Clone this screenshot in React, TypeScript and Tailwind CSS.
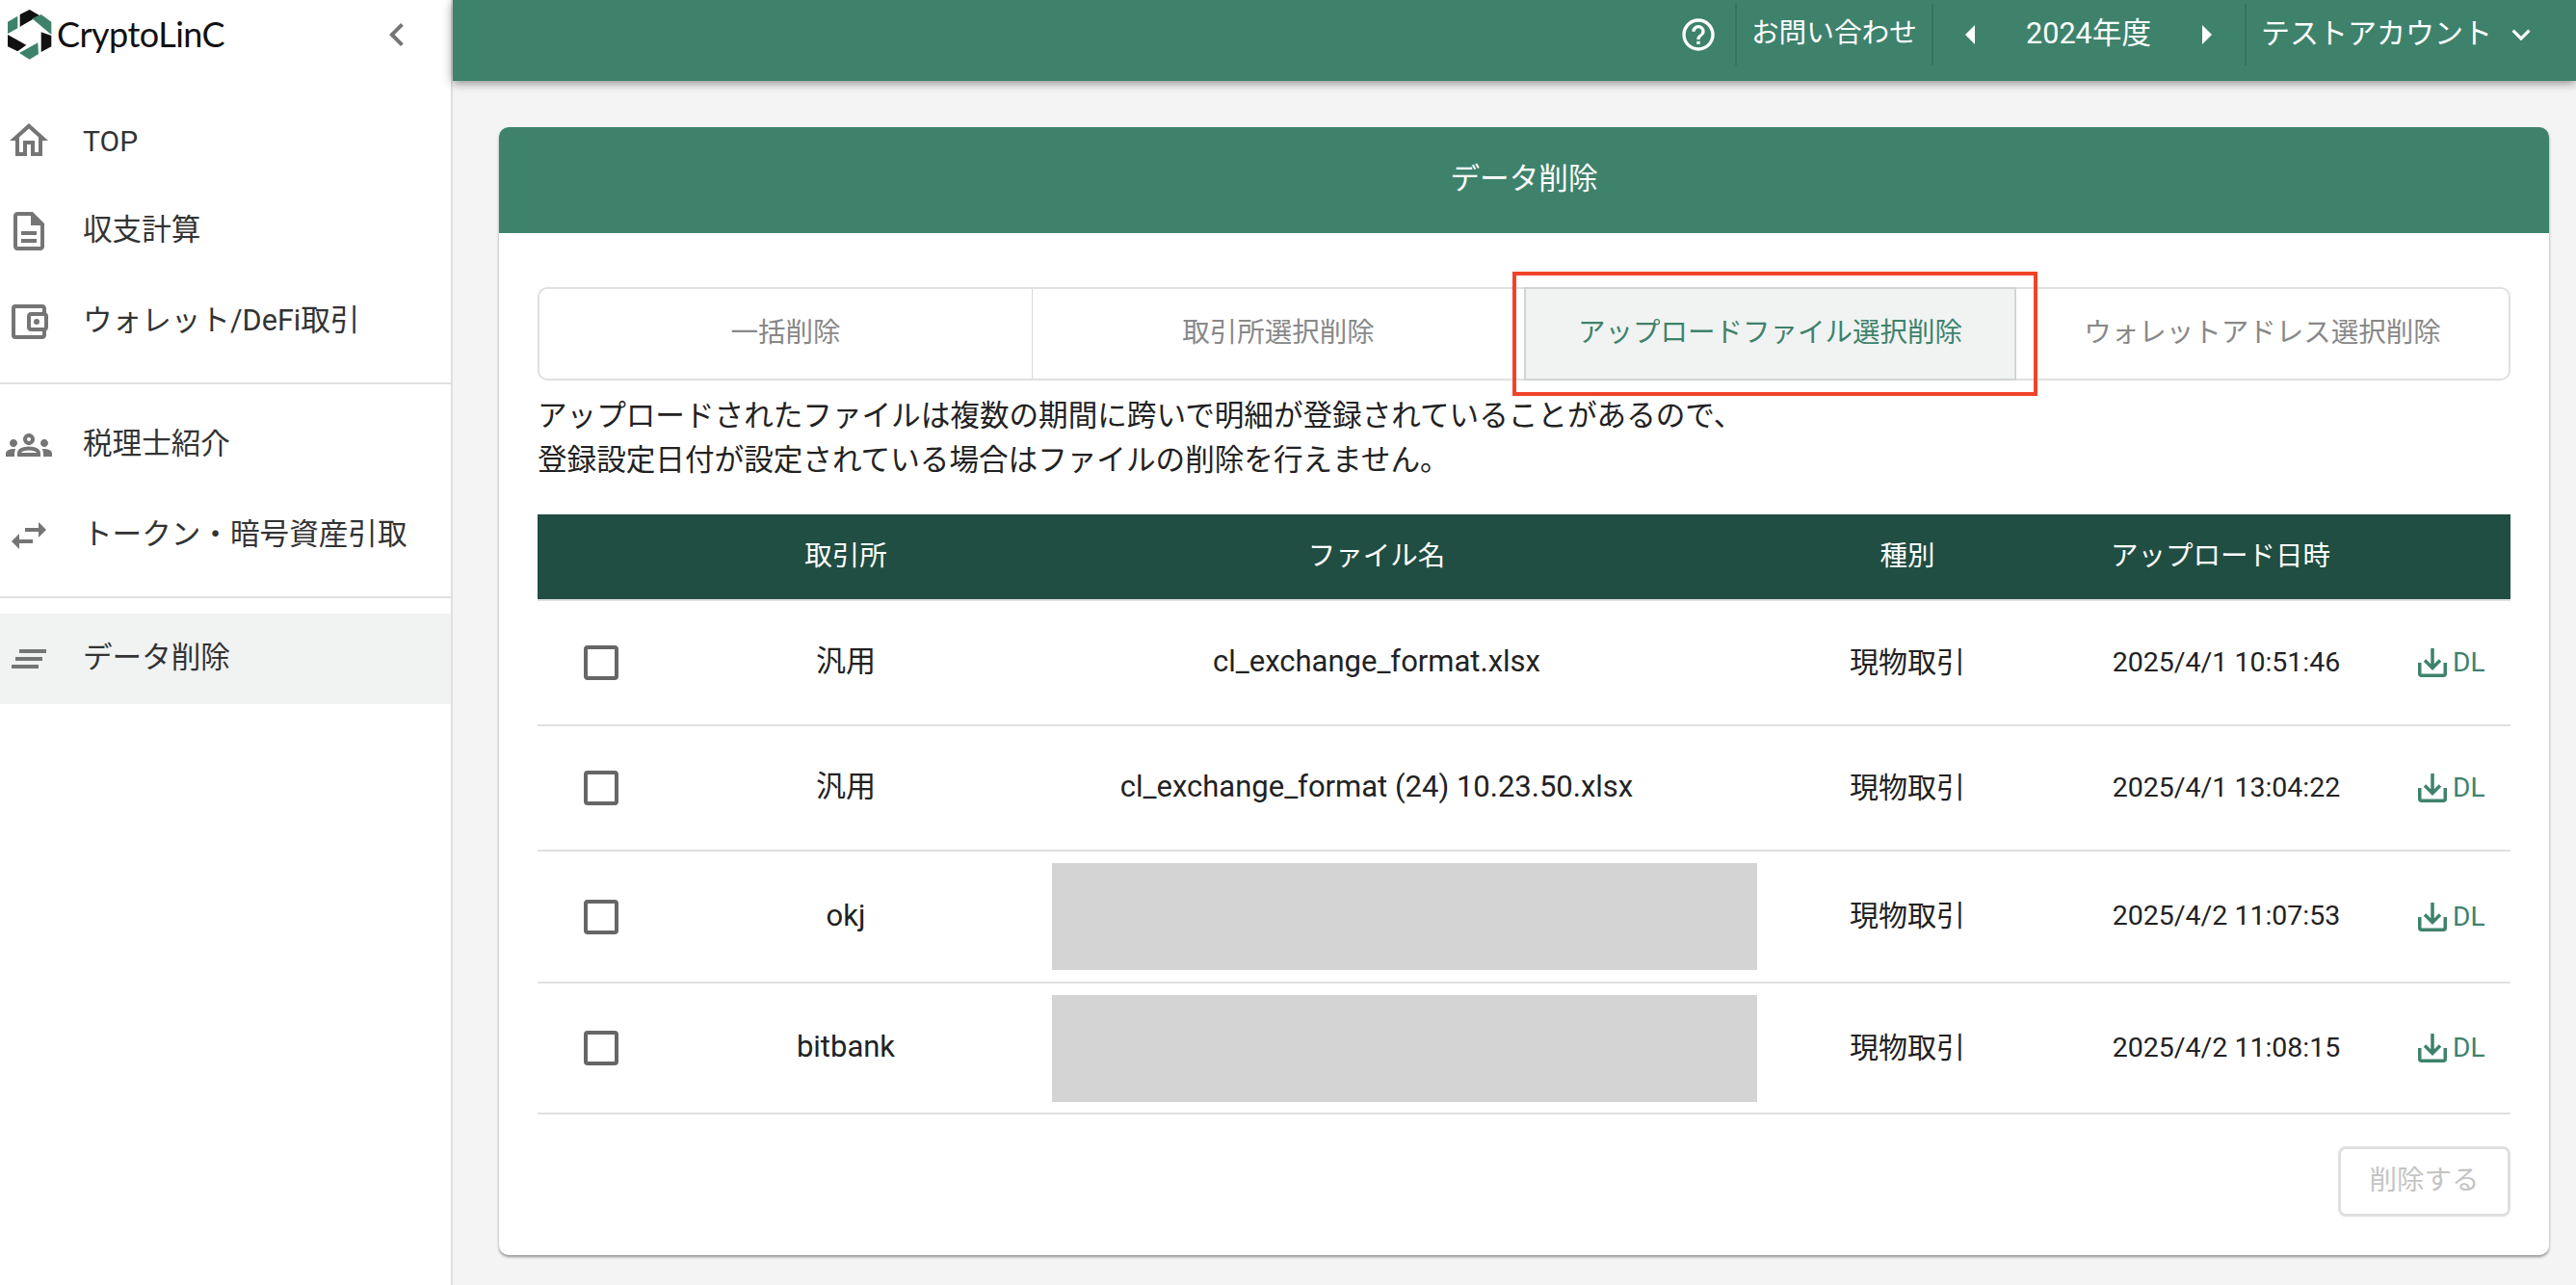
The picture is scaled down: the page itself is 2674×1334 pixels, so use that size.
import { MdOutlineHome, MdOutlineAccountBalanceWallet, MdOutlineGroups, MdSwapHoriz, MdChevronLeft, MdHelpOutline, MdArrowLeft, MdArrowRight, MdKeyboardArrowDown } from "react-icons/md";

const font = "font-['Roboto','Noto_Sans_CJK_JP',sans-serif]";

const rows = [
  { exchange: "汎用", file: "cl_exchange_format.xlsx", date: "2025/4/1 10:51:46", h: "h-[130px]" },
  { exchange: "汎用", file: "cl_exchange_format (24) 10.23.50.xlsx", date: "2025/4/1 13:04:22", h: "h-[130px]" },
  { exchange: "okj", file: "", date: "2025/4/2 11:07:53", h: "h-[137px]" },
  { exchange: "bitbank", file: "", date: "2025/4/2 11:08:15", h: "h-[136px]" },
];

const tabs = ["一括削除", "取引所選択削除", "アップロードファイル選択削除", "ウォレットアドレス選択削除"];

function Logo() {
  return (
    <svg viewBox="0 0 46 52" className="w-[46px] h-[52px] shrink-0">
      <path d="M12.700 5 22.700 0 33 6 14 17 12.700 18z" fill="#111" />
      <path d="M25.300 9.300 34.700 5 45.300 12.700V26z" fill="#3e826c" />
      <path d="M34.700 23.300 45.300 27V38.300L34.700 44z" fill="#111" />
      <path d="M12 45 31.300 34.300 32 46 22.700 51.700z" fill="#3e826c" />
      <path d="M0 26 19.300 36.700 10.300 43.300 0 38.300z" fill="#111" />
      <path d="M0 12.700 10.300 6.700V19.300L0 25z" fill="#3e826c" />
    </svg>
  );
}

function DocIcon() {
  return (
    <svg viewBox="0 0 24 24" className="w-12 h-12 shrink-0" fill="#757575">
      <path d="M6 2h8l6 6v12c0 1.100-.9 2-2 2H6c-1.100 0-2-.9-2-2V4c0-1.100.9-2 2-2zm0 2v16h12V9h-5V4H6zm2 8h8v2H8zm0 4h8v2H8z" />
    </svg>
  );
}

function NotesIcon() {
  return (
    <svg viewBox="0 0 48 48" className="w-12 h-12 shrink-0" fill="#757575">
      <path d="M14 14h28v4H14zM10 22h28v4H10zM6 30h28v4H6z" />
    </svg>
  );
}

function DownloadIcon() {
  return (
    <svg viewBox="0 0 30 30" className="w-[30px] h-[30px] shrink-0" fill="none" stroke="#3e826c" strokeWidth="3.500">
      <path d="M15 0v20M7 12.500l8 8 8-8" />
      <path d="M1.750 15v11.250a2 2 0 0 0 2 2h22.500a2 2 0 0 0 2-2V15" />
    </svg>
  );
}

function NavItem({ icon, label, active }: { icon: React.ReactNode; label: string; active?: boolean }) {
  return (
    <div className={`flex items-center h-[94px] pl-[6px] gap-[32px] text-[30.600px] text-[#333] ${active ? "bg-[#f0f3f2]" : ""}`}>
      {icon}
      <span className={label === "TOP" ? "text-[30px]" : "pb-[3px]"}>{label}</span>
    </div>
  );
}

export default function App() {
  return (
    <div className={`${font} flex h-[1334px] w-[2674px] overflow-hidden bg-[#f4f4f4]`}>
      <aside className="w-[470px] shrink-0 bg-white border-r-2 border-[#e0e0e0]">
        <div className="flex items-center h-[72px] pl-[8px] pr-[32px]">
          <Logo />
          <span className="ml-[5px] pb-[2px] text-[36px] tracking-[-0.5px] text-[#111] font-['Lato',sans-serif]">CryptoLinC</span>
          <MdChevronLeft className="ml-auto w-12 h-12 text-[#757575]" />
        </div>
        <div className="pt-[27px] pb-4 border-b-2 border-[#e0e0e0]">
          <NavItem icon={<MdOutlineHome className="w-12 h-12 shrink-0 text-[#757575]" />} label="TOP" />
          <NavItem icon={<DocIcon />} label="収支計算" />
          <NavItem icon={<MdOutlineAccountBalanceWallet className="w-12 h-12 shrink-0 text-[#757575]" />} label="ウォレット/DeFi取引" />
        </div>
        <div className="py-4 border-b-2 border-[#e0e0e0]">
          <NavItem icon={<MdOutlineGroups className="w-12 h-12 shrink-0 text-[#757575]" />} label="税理士紹介" />
          <NavItem icon={<MdSwapHoriz className="w-12 h-12 shrink-0 text-[#757575]" />} label="トークン・暗号資産引取" />
        </div>
        <div className="pt-4">
          <NavItem icon={<NotesIcon />} label="データ削除" active />
        </div>
      </aside>

      <div className="flex-1 min-w-0 flex flex-col">
        <header className="flex items-center justify-end h-[84px] shrink-0 bg-[#3e826c] text-white text-[28.700px] shadow-[0_2px_10px_rgba(0,0,0,0.45)] pr-[38px] z-10">
          <div className="flex items-center h-[64px] -mt-[12px] pr-[18px]">
            <MdHelpOutline className="w-10 h-10" />
          </div>
          <div className="flex items-center h-[64px] -mt-[12px] px-[15px] pb-[3px] border-l-2 border-[#367360]">お問い合わせ</div>
          <div className="flex items-center h-[64px] -mt-[12px] pl-[15px] pr-[16px] border-l-2 border-[#367360]">
            <MdArrowLeft className="w-12 h-12" />
            <span className="w-[196px] text-center text-[30.600px] pb-[3px]">2024年度</span>
            <MdArrowRight className="w-12 h-12" />
          </div>
          <div className="flex items-center h-[64px] -mt-[12px] pl-[15px] border-l-2 border-[#367360] text-[30px]">
            <span className="pb-[3px]">テストアカウント</span>
            <MdKeyboardArrowDown className="ml-[11px] w-[38px] h-[38px]" />
          </div>
        </header>

        <main className="pt-[48px] pl-[48px] pr-[28px]">
          <div className="h-[1171px] bg-white rounded-[10px] shadow-[0_2px_3px_rgba(0,0,0,0.4)] overflow-hidden">
            <div className="flex items-center justify-center h-[110px] pb-[2px] bg-[#3e826c] text-white text-[30.600px]">データ削除</div>
            <div className="pl-[40px] pr-[40px] pt-[56px]">
              <div className="grid grid-cols-4 h-[97px] rounded-[10px] border-2 border-[#e0e0e0] text-[#888] text-[28.500px]">
                {tabs.map((t, i) => (
                  <div
                    key={t}
                    className={`flex items-center justify-center ${i === 1 ? "border-l border-[#d8d8d8]" : ""} ${i === 2 ? "relative bg-[#f0f3f2] text-[#3e826c] border-2 border-[#d0d5d3] -my-[2px]" : ""}`}
                  >
                    {t}
                    {i === 2 && <div className="absolute -left-[14px] -right-[24px] -top-[18px] -bottom-[18px] border-4 border-[#f04329]" />}
                  </div>
                ))}
              </div>
              <p className="mt-[14px] text-[30.600px] leading-[46px] text-[#222]">
                アップロードされたファイルは複数の期間に跨いで明細が登録されていることがあるので、
                <br />
                登録設定日付が設定されている場合はファイルの削除を行えません。
              </p>
              <div className="mt-[33px]">
                <div className="grid grid-cols-[132px_376px_726px_376px_274px_164px] items-center h-[90px] bg-[#204e42] border-b-2 border-[#e0e0e0] text-white text-[28.500px] text-center">
                  <div />
                  <div>取引所</div>
                  <div>ファイル名</div>
                  <div>種別</div>
                  <div>アップロード日時</div>
                  <div />
                </div>
                {rows.map((r) => (
                  <div key={r.date} className={`grid grid-cols-[132px_376px_726px_376px_274px_164px] items-center ${r.h} border-b-2 border-[#e0e0e0] text-[#222] text-[31px] text-center`}>
                    <div className="flex justify-center">
                      <span className="w-9 h-9 rounded-[4px] border-4 border-[#666]" />
                    </div>
                    <div className="pb-[1px]">{r.exchange}</div>
                    <div className="relative h-full flex items-center justify-center pb-[1px]">
                      {r.file}
                      {!r.file && <div className="absolute left-[26px] top-[12px] h-[111px] w-[732px] bg-[#d4d4d4]" />}
                    </div>
                    <div className="pb-[2px] text-[30px]">現物取引</div>
                    <div className="pl-[12px] text-[28.500px]">{r.date}</div>
                    <div className="flex items-center pl-[68px] text-[#3e826c] text-[28px]">
                      <DownloadIcon />
                      <span className="ml-[6px]">DL</span>
                    </div>
                  </div>
                ))}
              </div>
              <div className="flex justify-end mt-[33px]">
                <button className="w-[179px] h-[73px] rounded-[8px] border-[3px] border-[#e0e0e0] text-[28.500px] text-[#c4c4c4]">削除する</button>
              </div>
            </div>
          </div>
        </main>
      </div>
    </div>
  );
}
